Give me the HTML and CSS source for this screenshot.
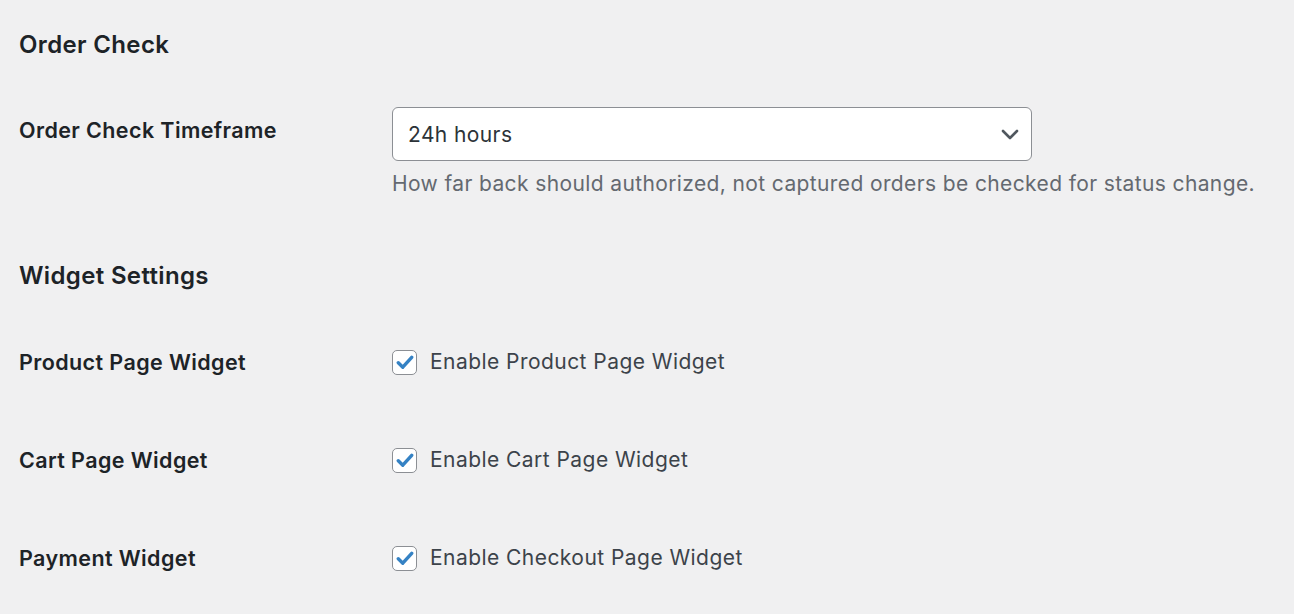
FILE: index.html
```html
<!DOCTYPE html>
<html lang="en">
<head>
<meta charset="utf-8">
<title>Settings</title>
<link rel="stylesheet" href="styles.css">
</head>
<body>
<div class="wrap">
  <h2 class="section-title first">Order Check</h2>
  <div class="form-table">
    <div class="row row-select">
      <div class="label">Order Check Timeframe</div>
      <div class="field">
        <div class="select">
          <span class="select-value">24h hours</span>
          <svg class="chevron" width="18" height="11" viewBox="0 0 18 11"><path d="M2 2 L9 9 L16 2" fill="none" stroke="#50575e" stroke-width="2.6" stroke-linecap="round" stroke-linejoin="round"/></svg>
        </div>
        <p class="description">How far back should authorized, not captured orders be checked for status change.</p>
      </div>
    </div>
  </div>
  <h2 class="section-title second">Widget Settings</h2>
  <div class="form-table">
    <div class="row row-check">
      <div class="label">Product Page Widget</div>
      <div class="field check-field">
        <span class="checkbox"><svg width="18" height="15" viewBox="0 0 18 15"><path d="M2.3 7.8 L6.8 12.2 L15.7 2.3" fill="none" stroke="#3582c4" stroke-width="3.4" stroke-linecap="round" stroke-linejoin="round"/></svg></span>
        <span class="check-label">Enable Product Page Widget</span>
      </div>
    </div>
    <div class="row row-check">
      <div class="label">Cart Page Widget</div>
      <div class="field check-field">
        <span class="checkbox"><svg width="18" height="15" viewBox="0 0 18 15"><path d="M2.3 7.8 L6.8 12.2 L15.7 2.3" fill="none" stroke="#3582c4" stroke-width="3.4" stroke-linecap="round" stroke-linejoin="round"/></svg></span>
        <span class="check-label">Enable Cart Page Widget</span>
      </div>
    </div>
    <div class="row row-check">
      <div class="label">Payment Widget</div>
      <div class="field check-field">
        <span class="checkbox"><svg width="18" height="15" viewBox="0 0 18 15"><path d="M2.3 7.8 L6.8 12.2 L15.7 2.3" fill="none" stroke="#3582c4" stroke-width="3.4" stroke-linecap="round" stroke-linejoin="round"/></svg></span>
        <span class="check-label">Enable Checkout Page Widget</span>
      </div>
    </div>
  </div>
</div>
</body>
</html>
```

FILE: styles.css
```css
html, body {
  margin: 0;
  padding: 0;
}
body {
  background: #f0f0f1;
  color: #1d2327;
  font-family: Inter, "Noto Sans", sans-serif;
  width: 1294px;
  height: 614px;
  overflow: hidden;
}
.wrap {
  padding-left: 19px;
}
.section-title {
  margin: 0;
  font-size: 24px;
  font-weight: 600;
  line-height: 30px;
  letter-spacing: 0.35px;
}
.section-title.first {
  padding-top: 30px;
}
.section-title.second {
  padding-top: 63px;
}
.form-table {
  display: flex;
  flex-direction: column;
}
.row {
  display: flex;
  align-items: flex-start;
}
.label {
  width: 373px;
  flex: none;
  font-size: 21.5px;
  font-weight: 600;
  line-height: 28px;
  letter-spacing: 0.4px;
}
.row-select {
  padding-top: 47px;
}
.row-select .label {
  padding-top: 9px;
}
.select {
  box-sizing: border-box;
  width: 640px;
  height: 54px;
  background: #fff;
  border: 1px solid #8c8f94;
  border-radius: 6px;
  display: flex;
  align-items: center;
  justify-content: space-between;
  padding: 0 12px 0 15px;
}
.select-value {
  font-size: 21px;
  letter-spacing: 0.4px;
  color: #2c3338;
}
.description {
  margin: 9px 0 0;
  font-size: 21px;
  letter-spacing: 0.38px;
  line-height: 28px;
  color: #646970;
}
.row-check {
  height: 98px;
}
.row-check:first-child {
  margin-top: 50px;
}
.row-check .label {
  padding-top: 7px;
}
.check-field {
  display: flex;
  align-items: center;
  gap: 13px;
  padding-top: 7px;
}
.checkbox {
  box-sizing: border-box;
  width: 25px;
  height: 25px;
  border: 1px solid #8c8f94;
  border-radius: 5px;
  background: #fff;
  display: flex;
  align-items: center;
  justify-content: center;
  flex: none;
}
.check-label {
  font-size: 21px;
  letter-spacing: 0.45px;
  line-height: 28px;
  color: #3c434a;
}
```
